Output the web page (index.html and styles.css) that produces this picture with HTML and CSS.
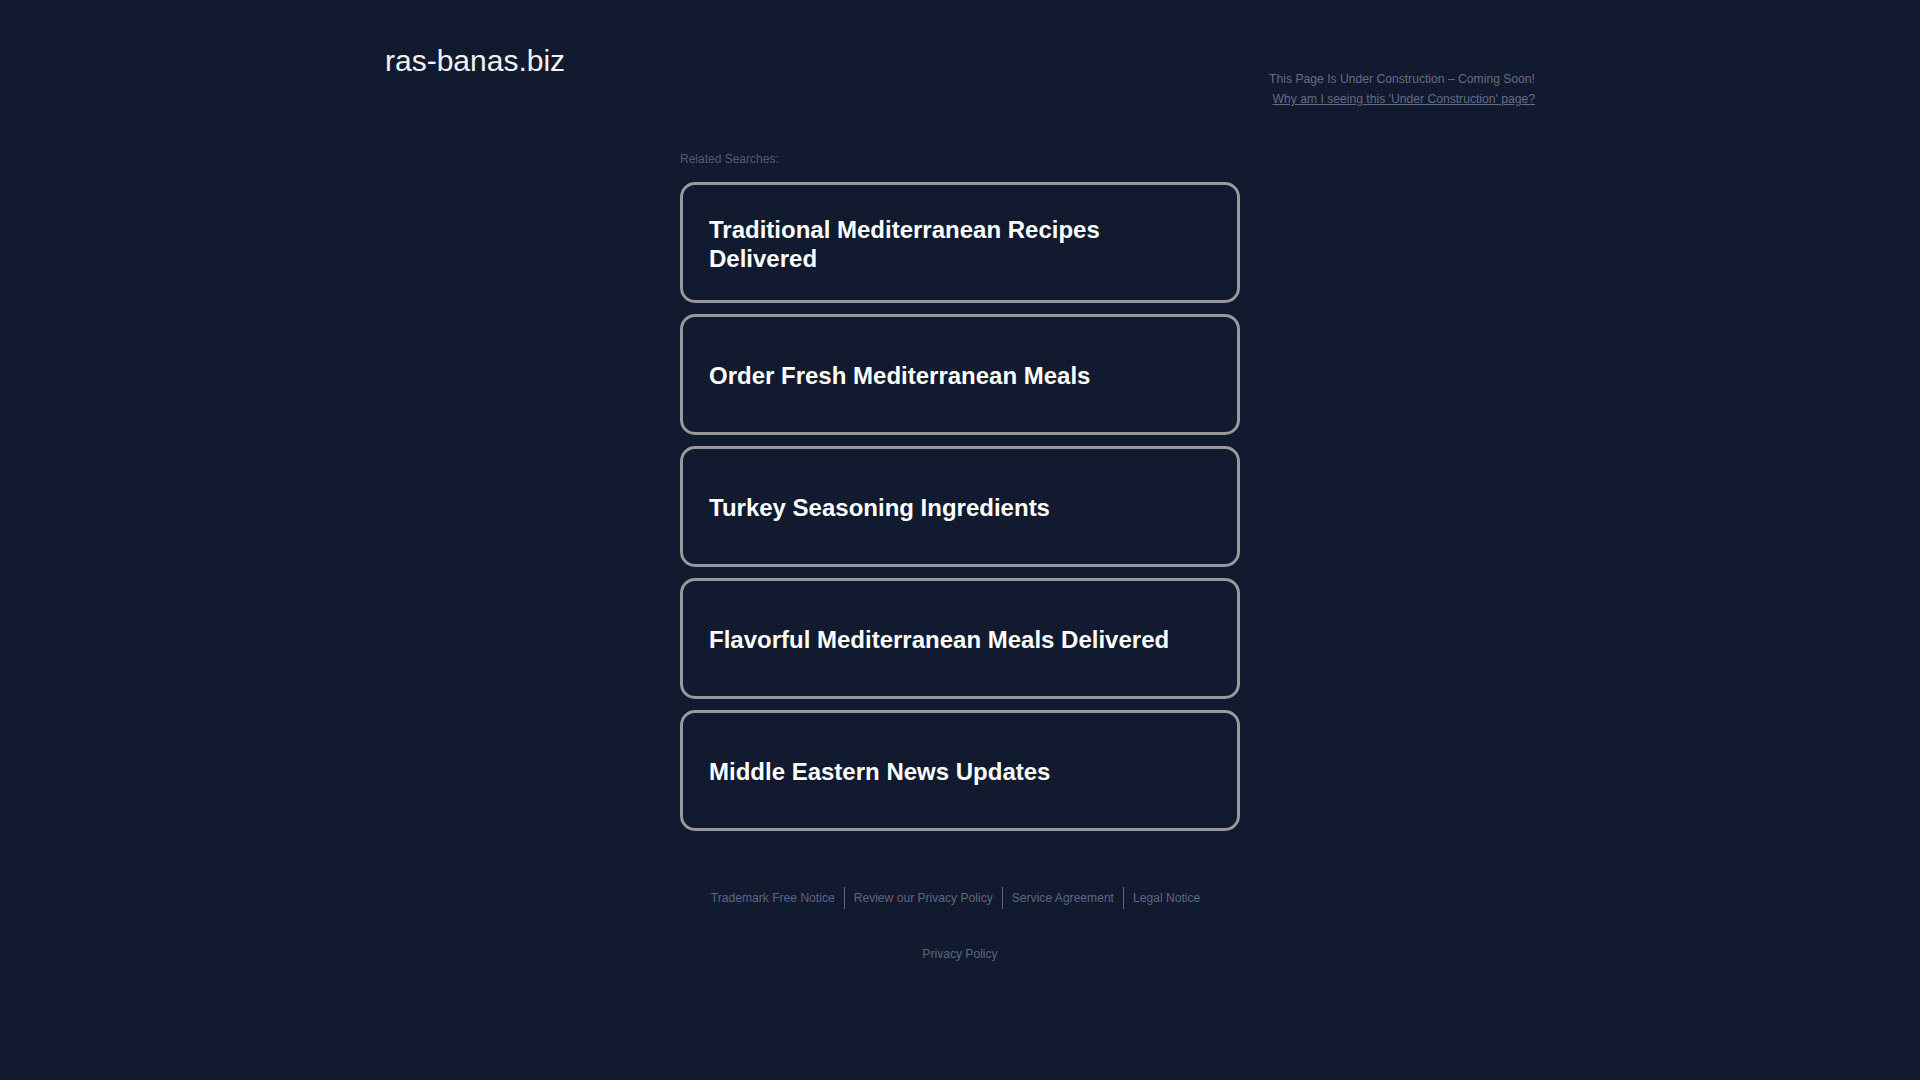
FILE: index.html
```html
<!DOCTYPE html>
<html lang="en">
<head>
  <meta charset="UTF-8">
  <meta name="viewport" content="width=device-width, initial-scale=1.0">
  <title>ras-banas.biz</title>
  <link rel="stylesheet" href="styles.css">
</head>
<body>
  <div class="header">
    <div class="domain">ras-banas.biz</div>
    <div class="notice">
      <div class="notice-text">This Page Is Under Construction &ndash; Coming Soon!</div>
      <a href="#" class="notice-link">Why am I seeing this 'Under Construction' page?</a>
    </div>
  </div>

  <div class="content">
    <div class="related-title">Related Searches:</div>

    <div class="search-list">
      <a href="#" class="search-card">Traditional Mediterranean Recipes Delivered</a>
      <a href="#" class="search-card">Order Fresh Mediterranean Meals</a>
      <a href="#" class="search-card">Turkey Seasoning Ingredients</a>
      <a href="#" class="search-card">Flavorful Mediterranean Meals Delivered</a>
      <a href="#" class="search-card">Middle Eastern News Updates</a>
    </div>
  </div>

  <div class="footer">
    <div class="footer-links">
      <a href="#" class="footer-link">Trademark Free Notice</a>
      <a href="#" class="footer-link">Review our Privacy Policy</a>
      <a href="#" class="footer-link">Service Agreement</a>
      <a href="#" class="footer-link">Legal Notice</a>
    </div>
    <a href="#" class="privacy-link">Privacy Policy</a>
  </div>
</body>
</html>
```

FILE: styles.css
```css
body {
  font-family: "Liberation Sans", Arial, Helvetica, sans-serif;
  margin: 0;
  padding: 0;
  background-color: #111a2e;
  color: #fff;
  min-height: 100vh;
}
a {
  text-decoration: none;
}
.header {
  width: 1150px;
  margin: 0 auto;
  padding-top: 43px;
  display: flex;
  justify-content: space-between;
  align-items: flex-start;
}
.domain {
  font-size: 30px;
  line-height: 36px;
  color: #f2f2f2;
}
.notice {
  padding-top: 26px;
  text-align: right;
  font-size: 12.15px;
  line-height: 20px;
  color: #656c8a;
}
.notice-link {
  color: #656c8a;
  text-decoration: underline;
}
.content {
  width: 560px;
  margin: 41px auto 0;
}
.related-title {
  font-size: 12px;
  line-height: 18px;
  color: #525a76;
  margin-bottom: 14px;
}
.search-list {
  display: flex;
  flex-direction: column;
  gap: 11px;
}
.search-card {
  box-sizing: border-box;
  height: 121px;
  display: flex;
  align-items: center;
  padding: 2px 26px 0;
  border: 3px solid #999;
  border-radius: 15px;
  color: #fff;
  font-size: 24px;
  font-weight: bold;
  line-height: 29px;
}
.footer {
  margin-top: 56px;
  display: flex;
  flex-direction: column;
  align-items: center;
  font-size: 12.1px;
}
.footer-links {
  display: flex;
}
.footer-link {
  color: #5e6683;
  line-height: 22px;
  padding: 0 9px;
  border-left: 1px solid #5e6683;
}
.footer-link:first-child {
  border-left: none;
  padding-left: 0;
}
.privacy-link {
  margin-top: 36px;
  color: #5e6683;
  line-height: 18px;
}
```
